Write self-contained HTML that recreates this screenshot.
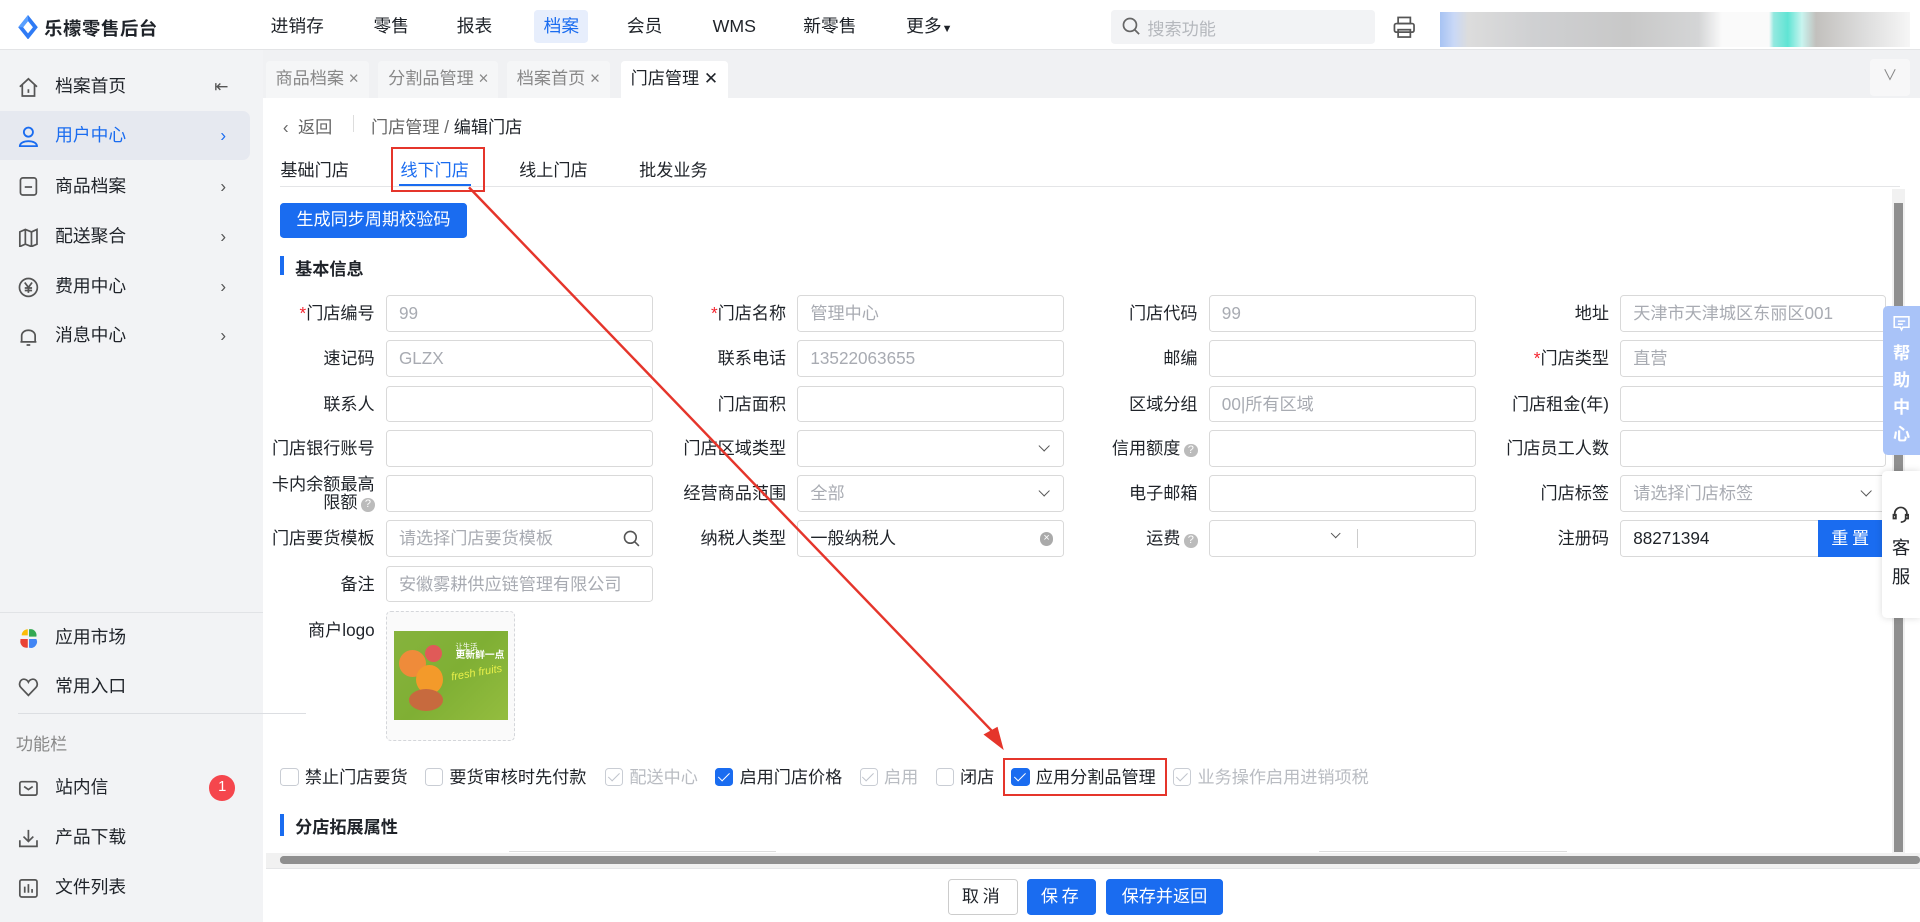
<!DOCTYPE html>
<html><head><meta charset="utf-8">
<style>
*{box-sizing:border-box;margin:0;padding:0}
html,body{width:1920px;height:922px;overflow:hidden;background:#fff}
#w{position:relative;width:1568px;height:753px;zoom:1.2244898;font-family:"Liberation Sans","Noto Sans CJK SC",sans-serif;font-size:14px;color:#1f2329;overflow:hidden}
.a{position:absolute;white-space:nowrap}
.top{left:0;top:0;width:1568px;height:41px;border-bottom:1px solid #e3e4e6;background:#fff}
.nav{top:8px;height:27px;line-height:27px;font-size:14.5px;padding:0 8px}
.side{left:0;top:41px;width:215px;height:712px;background:#f2f3f5}
.si{left:0;width:204px;height:40px;line-height:40px;padding-left:45px;font-size:14.5px}
.si .ic{position:absolute;left:15px;top:12px;width:17px;height:17px}
.chev{position:absolute;left:180px;top:0;color:#555;font-size:14px}
.tabs{left:215px;top:41px;width:1353px;height:39px;background:#f0f1f3}
.tab{top:50px;height:30px;line-height:28px;padding:0 8px;background:#f5f6f7;color:#888;font-size:14px;border-radius:3px 3px 0 0}
.lbl{text-align:right;width:110px;font-size:14px;line-height:30px;height:30px}
.req:before{content:"*";color:#f5222d}
.in{height:30px;border:1px solid #d9d9d9;border-radius:3px;width:218px;line-height:28px;padding-left:10px;color:#a8abb2;font-size:14px;background:#fff}
.in.dk{color:#1f2329}
.dd:after{content:"";position:absolute;right:12px;top:9px;width:6px;height:6px;border-right:1.3px solid #555;border-bottom:1.3px solid #555;transform:rotate(45deg)}
.q{display:inline-block;width:11px;height:11px;border-radius:50%;background:#bbb;color:#fff;font-size:9px;line-height:11px;text-align:center;vertical-align:1px;margin-left:3px}
.cb{top:627px;height:16px;line-height:16px;font-size:14px}
.box{display:inline-block;width:15px;height:15px;border:1px solid #c9cdd4;border-radius:3px;vertical-align:-3px;margin-right:5px;position:relative;background:#fff}
.box.on{background:#1a6cf0;border-color:#1a6cf0}
.box.on:after,.box.dis:after{content:"";position:absolute;left:4px;top:1px;width:4px;height:8px;border-right:1.6px solid #fff;border-bottom:1.6px solid #fff;transform:rotate(45deg)}
.box.dis:after{border-color:#c0c4cc}
.gray{color:#b9bcc2}
.btn{height:29px;line-height:27px;border-radius:3px;text-align:center;font-size:14px;color:#fff;background:#1a6cf0;border:1px solid #1a6cf0}
</style></head><body><div id="w">

<div class="a top"></div>
<svg class="a" style="left:14px;top:12px" width="18" height="20" viewBox="0 0 18 20"><path d="M9 0 L17 10 L9 20 L1 10Z" fill="#2f7bf5"/><path d="M9 5 L13 10 L9 15 L5 10Z" fill="#fff"/><path d="M9 0 L9 5 L5 10 L1 10Z" fill="#5aa0ff"/></svg>
<div class="a" style="left:36px;top:12px;font-size:15px;font-weight:bold;letter-spacing:0.5px">乐檬零售后台</div>
<div class="a nav" style="left:213px">进销存</div>
<div class="a nav" style="left:297px">零售</div>
<div class="a nav" style="left:365px">报表</div>
<div class="a nav" style="left:436px;width:44px;background:#e7eefc;color:#1a6cf0;border-radius:3px">档案</div>
<div class="a nav" style="left:504px">会员</div>
<div class="a nav" style="left:574px">WMS</div>
<div class="a nav" style="left:648px">新零售</div>
<div class="a nav" style="left:732px">更多<span style="font-size:9px">▼</span></div>
<div class="a" style="left:907px;top:8px;width:216px;height:28px;background:#f2f3f5;border-radius:3px"></div>
<svg class="a" style="left:916px;top:14px" width="15" height="16" viewBox="0 0 15 16"><circle cx="6.5" cy="6.5" r="5.3" fill="none" stroke="#666" stroke-width="1.4"/><path d="M10.5 10.5 L14 14" stroke="#666" stroke-width="1.4"/></svg>
<div class="a" style="left:937px;top:12px;color:#b5b8bd;font-size:14px">搜索功能</div>
<svg class="a" style="left:1137px;top:12px" width="20" height="20" viewBox="0 0 20 20" fill="none" stroke="#555" stroke-width="1.4"><rect x="5" y="2" width="10" height="5"/><rect x="2" y="7" width="16" height="7" rx="1.5"/><rect x="5" y="12" width="10" height="6"/></svg>
<div class="a" style="left:1176px;top:10px;width:384px;height:28px;background:linear-gradient(90deg,#a7c3f3 0,#c9d8f6 3%,#dcdcdc 6%,#cfd0d2 20%,#c8c8c8 40%,#d4d5d6 55%,#fafafa 60%,#fafafa 70%,#93e8df 71%,#60e4d4 74%,#c9f4ef 77%,#c2c0bd 80%,#dcdcdc 90%,#f6f6f6 100%)"></div>
<div class="a" style="left:1170px;top:41px;width:392px;height:12px;background:#f5f5f5"></div>

<div class="a side"></div>
<div class="a si" style="top:51px"><svg class="ic" viewBox="0 0 17 17" fill="none" stroke="#555" stroke-width="1.4"><path d="M1.5 8 L8.5 1.5 L15.5 8 M3.5 6.5 V15.5 H13.5 V6.5 M8.5 10 V13"/></svg>档案首页<span class="chev" style="left:175px">⇤</span></div>
<div class="a si" style="top:91px;background:#e6e9f0;color:#1a6cf0;border-radius:0 6px 6px 0"><svg class="ic" viewBox="0 0 17 17" fill="none" stroke="#1a6cf0" stroke-width="1.5"><circle cx="8.5" cy="5" r="3.7"/><path d="M1.5 16.5 C1.5 11 15.5 11 15.5 16.5Z"/></svg>用户中心<span class="chev" style="color:#1a6cf0">›</span></div>
<div class="a si" style="top:132px"><svg class="ic" viewBox="0 0 17 17" fill="none" stroke="#555" stroke-width="1.4"><rect x="2" y="1.5" width="13" height="14" rx="2"/><path d="M5.5 9 H11.5"/></svg>商品档案<span class="chev">›</span></div>
<div class="a si" style="top:173px"><svg class="ic" viewBox="0 0 17 17" fill="none" stroke="#555" stroke-width="1.4"><path d="M1.5 4 L6 2 L11 4 L15.5 2 V14 L11 16 L6 14 L1.5 16Z M6 2 V14 M11 4 V16"/></svg>配送聚合<span class="chev">›</span></div>
<div class="a si" style="top:214px"><svg class="ic" viewBox="0 0 17 17" fill="none" stroke="#555" stroke-width="1.4"><circle cx="8.5" cy="8.5" r="7.3"/><path d="M5.5 4.5 L8.5 8.5 L11.5 4.5 M8.5 8.5 V13 M5.5 9 H11.5 M5.5 11 H11.5"/></svg>费用中心<span class="chev">›</span></div>
<div class="a si" style="top:254px"><svg class="ic" viewBox="0 0 17 17" fill="none" stroke="#555" stroke-width="1.4"><path d="M3 13 V8 C3 2 14 2 14 8 V13 H2 H15 M7 15.5 H10"/></svg>消息中心<span class="chev">›</span></div>
<div class="a" style="left:0;top:500px;width:215px;border-top:1px solid #e1e3e6"></div>
<div class="a si" style="top:501px"><svg class="ic" viewBox="0 0 17 17"><path d="M8 1 A5 5 0 0 0 3 6 H8Z" fill="#fbbc05"/><path d="M9 1 A5 5 0 0 1 15 7 H9Z" fill="#34a853"/><path d="M8 9 V16 A5 5 0 0 1 2 10 V9Z" fill="#ea4335"/><path d="M9 9 H15 A5 5 0 0 1 9 16Z" fill="#4285f4"/></svg>应用市场</div>
<div class="a si" style="top:541px"><svg class="ic" viewBox="0 0 17 17" fill="none" stroke="#555" stroke-width="1.4"><path d="M8.5 15 L2.3 8.5 C0 6 2 1.5 5 1.8 C6.8 2 8 3.2 8.5 4.2 C9 3.2 10.2 2 12 1.8 C15 1.5 17 6 14.7 8.5Z"/></svg>常用入口</div>
<div class="a" style="left:15px;top:582px;width:235px;border-top:1px solid #dcdee2;width:235px"></div>
<div class="a" style="left:13px;top:596px;color:#888;font-size:14px">功能栏</div>
<div class="a si" style="top:623px"><svg class="ic" viewBox="0 0 17 17" fill="none" stroke="#555" stroke-width="1.4"><rect x="1.5" y="3" width="14" height="11" rx="1.5"/><path d="M5 7 L8.5 9.5 L12 7"/></svg>站内信</div>
<div class="a" style="left:171px;top:633px;width:21px;height:21px;border-radius:50%;background:#f5464d;color:#fff;font-size:12px;line-height:21px;text-align:center">1</div>
<div class="a si" style="top:664px"><svg class="ic" viewBox="0 0 17 17" fill="none" stroke="#555" stroke-width="1.4"><path d="M8.5 1.5 V11 M4.5 7 L8.5 11 L12.5 7 M1.5 10 V15 H15.5 V10"/></svg>产品下载</div>
<div class="a si" style="top:705px"><svg class="ic" viewBox="0 0 17 17" fill="none" stroke="#555" stroke-width="1.4"><rect x="1.5" y="1.5" width="14" height="14" rx="1.5"/><path d="M5.5 12 V7 M8.5 12 V5 M11.5 12 V9"/></svg>文件列表</div>

<div class="a tabs"></div>
<div class="a tab" style="left:217px">商品档案 ×</div>
<div class="a tab" style="left:309px">分割品管理 ×</div>
<div class="a tab" style="left:414px">档案首页 ×</div>
<div class="a tab" style="left:507px;background:#fff;color:#1f2329">门店管理 ✕</div>
<div class="a" style="left:1527px;top:48px;width:33px;height:30px;background:#f7f7f8;border-radius:3px;color:#888;text-align:center;line-height:28px;font-size:12px">∨</div>

<div class="a" style="left:231px;top:92px;color:#666">‹&nbsp; 返回</div>
<div class="a" style="left:288px;top:94px;height:14px;border-left:1px solid #ddd"></div>
<div class="a" style="left:303px;top:92px;color:#666">门店管理 / <span style="color:#1f2329">编辑门店</span></div>

<div class="a" style="left:229px;top:127px">基础门店</div>
<div class="a" style="left:327px;top:127px;color:#1a6cf0">线下门店</div>
<div class="a" style="left:424px;top:127px">线上门店</div>
<div class="a" style="left:522px;top:127px">批发业务</div>
<div class="a" style="left:229px;top:152px;width:1323px;border-top:1px solid #e4e5e7"></div>
<div class="a" style="left:326px;top:150px;width:59px;height:2px;background:#1a6cf0"></div>
<div class="a" style="left:319px;top:120px;width:77px;height:37px;border:2px solid #e5352b"></div>

<div class="a" style="left:1545px;top:154px;width:11px;height:546px;background:#f1f1f1"></div>
<div class="a" style="left:1547px;top:166px;width:7px;height:530px;background:#8f8f8f"></div>

<div class="a btn" style="left:229px;top:166px;width:152px;height:28px;line-height:26px">生成同步周期校验码</div>
<div class="a" style="left:229px;top:209px;width:3px;height:16px;background:#1a6cf0"></div>
<div class="a" style="left:241px;top:208px;font-weight:bold">基本信息</div>

<div class="a lbl req" style="left:196px;top:241px">门店编号</div><div class="a in" style="left:315px;top:241px">99</div>
<div class="a lbl" style="left:196px;top:278px">速记码</div><div class="a in" style="left:315px;top:278px">GLZX</div>
<div class="a lbl" style="left:196px;top:315px">联系人</div><div class="a in" style="left:315px;top:315px"></div>
<div class="a lbl" style="left:196px;top:351px">门店银行账号</div><div class="a in" style="left:315px;top:351px"></div>
<div class="a" style="left:215px;top:388px;width:91px;text-align:right;line-height:15px;font-size:14px">卡内余额最高<br>限额<span class="q">?</span></div><div class="a in" style="left:315px;top:388px"></div>
<div class="a lbl" style="left:196px;top:425px">门店要货模板</div><div class="a in" style="left:315px;top:425px">请选择门店要货模板<svg style="position:absolute;right:9px;top:7px" width="14" height="14" viewBox="0 0 14 14" fill="none" stroke="#555" stroke-width="1.3"><circle cx="6" cy="6" r="4.8"/><path d="M9.5 9.5 L13 13"/></svg></div>
<div class="a lbl" style="left:196px;top:462px">备注</div><div class="a in" style="left:315px;top:462px">安徽雾耕供应链管理有限公司</div>
<div class="a lbl req" style="left:532px;top:241px">门店名称</div><div class="a in" style="left:651px;top:241px">管理中心</div>
<div class="a lbl" style="left:532px;top:278px">联系电话</div><div class="a in" style="left:651px;top:278px">13522063655</div>
<div class="a lbl" style="left:532px;top:315px">门店面积</div><div class="a in" style="left:651px;top:315px"></div>
<div class="a lbl" style="left:532px;top:351px">门店区域类型</div><div class="a in dd" style="left:651px;top:351px"></div>
<div class="a lbl" style="left:532px;top:388px">经营商品范围</div><div class="a in dd" style="left:651px;top:388px">全部</div>
<div class="a lbl" style="left:532px;top:425px">纳税人类型</div><div class="a in dk" style="left:651px;top:425px">一般纳税人<span style="position:absolute;right:8px;top:9px;width:11px;height:11px;border-radius:50%;background:#aaa;color:#fff;font-size:9px;line-height:11px;text-align:center">×</span></div>
<div class="a lbl" style="left:868px;top:241px">门店代码</div><div class="a in" style="left:987px;top:241px">99</div>
<div class="a lbl" style="left:868px;top:278px">邮编</div><div class="a in" style="left:987px;top:278px"></div>
<div class="a lbl" style="left:868px;top:315px">区域分组</div><div class="a in" style="left:987px;top:315px">00|所有区域</div>
<div class="a lbl" style="left:868px;top:351px">信用额度<span class="q">?</span></div><div class="a in" style="left:987px;top:351px"></div>
<div class="a lbl" style="left:868px;top:388px">电子邮箱</div><div class="a in" style="left:987px;top:388px"></div>
<div class="a lbl" style="left:868px;top:425px">运费<span class="q">?</span></div><div class="a in" style="left:987px;top:425px"><span style="position:absolute;left:100px;top:7px;width:6px;height:6px;border-right:1.3px solid #555;border-bottom:1.3px solid #555;transform:rotate(45deg)"></span><span style="position:absolute;left:120px;top:6px;height:16px;border-left:1px solid #ccc"></span></div>
<div class="a lbl" style="left:1204px;top:241px">地址</div><div class="a in" style="left:1323px;top:241px;width:217px">天津市天津城区东丽区001</div>
<div class="a lbl req" style="left:1204px;top:278px">门店类型</div><div class="a in" style="left:1323px;top:278px;width:217px">直营</div>
<div class="a lbl" style="left:1204px;top:315px">门店租金(年)</div><div class="a in" style="left:1323px;top:315px;width:217px"></div>
<div class="a lbl" style="left:1204px;top:351px">门店员工人数</div><div class="a in" style="left:1323px;top:351px;width:217px"></div>
<div class="a lbl" style="left:1204px;top:388px">门店标签</div><div class="a in dd" style="left:1323px;top:388px;width:217px">请选择门店标签</div>
<div class="a lbl" style="left:1204px;top:425px">注册码</div><div class="a in dk" style="left:1323px;top:425px;width:217px">88271394</div>
<div class="a" style="left:1485px;top:425px;width:55px;height:30px;background:#1a6cf0;color:#fff;text-align:center;line-height:30px;font-size:14px;letter-spacing:3px">重置</div>

<div class="a" style="left:1538px;top:250px;width:30px;height:122px;background:#a9c3f8;border-radius:4px 0 0 4px;color:#fff;text-align:center;font-size:14px;line-height:22px;padding-top:6px;font-weight:bold"><svg width="14" height="14" viewBox="0 0 14 14" fill="none" stroke="#fff" stroke-width="1.3"><path d="M1 1.5 H13 V10 H8 L7 12 L6 10 H1Z M4 5 H10 M4 7.5 H8"/></svg><br>帮<br>助<br>中<br>心</div>
<div class="a" style="left:1537px;top:385px;width:31px;height:120px;background:#fff;border-radius:4px 0 0 4px;box-shadow:0 0 6px rgba(0,0,0,.15);text-align:center;font-size:15px;line-height:24px;padding-top:26px"><svg width="16" height="16" viewBox="0 0 16 16" fill="none" stroke="#333" stroke-width="1.4"><path d="M3 9 V7 A5 5 0 0 1 13 7 V9 M2 8 H4 V11 H2Z M12 8 H14 V11 H12Z M12 11 C12 13 10 14 8 14"/></svg><br>客<br>服</div>

<div class="a lbl" style="left:196px;top:500px">商户logo</div>
<div class="a" style="left:315px;top:499px;width:106px;height:106px;border:1px dashed #d4d6da;border-radius:4px;background:#fafafa"></div>
<div class="a" style="left:322px;top:515px;width:93px;height:73px;background:linear-gradient(135deg,#86b33d,#7faf34 50%,#94bd3f);overflow:hidden">
 <div style="position:absolute;left:4px;top:16px;width:22px;height:22px;border-radius:50%;background:#ef8b3a"></div>
 <div style="position:absolute;left:18px;top:28px;width:22px;height:24px;border-radius:50%;background:#f39a2a"></div>
 <div style="position:absolute;left:12px;top:48px;width:28px;height:18px;border-radius:50%;background:#c76a3e"></div>
 <div style="position:absolute;left:25px;top:12px;width:14px;height:14px;border-radius:50%;background:#e05a58"></div>
 <div style="position:absolute;left:50px;top:9px;color:#fff;font-size:6px;line-height:8px">让生活<br><b style="font-size:8px">更新鲜一点</b></div>
 <div style="position:absolute;left:46px;top:30px;color:#e9f04a;font-size:9px;font-style:italic;transform:rotate(-10deg)">fresh fruits</div>
</div>

<div class="a cb" style="left:229px"><span class="box"></span>禁止门店要货</div>
<div class="a cb" style="left:347px"><span class="box"></span>要货审核时先付款</div>
<div class="a cb gray" style="left:494px"><span class="box dis"></span>配送中心</div>
<div class="a cb" style="left:584px"><span class="box on"></span>启用门店价格</div>
<div class="a cb gray" style="left:702px"><span class="box dis"></span>启用</div>
<div class="a cb" style="left:764px"><span class="box"></span>闭店</div>
<div class="a cb" style="left:826px"><span class="box on"></span>应用分割品管理</div>
<div class="a cb gray" style="left:958px"><span class="box dis"></span>业务操作启用进销项税</div>
<div class="a" style="left:819px;top:619px;width:134px;height:31px;border:2px solid #e5352b"></div>

<div class="a" style="left:229px;top:665px;width:3px;height:18px;background:#1a6cf0"></div>
<div class="a" style="left:241px;top:664px;font-weight:bold">分店拓展属性</div>
<div class="a" style="left:416px;top:695px;width:218px;border-top:1px solid #ddd"></div>
<div class="a" style="left:1077px;top:695px;width:203px;border-top:1px solid #ddd"></div>

<div class="a" style="left:217px;top:697px;width:1351px;height:12px;background:#f1f1f1"></div>
<div class="a" style="left:229px;top:699px;width:1339px;height:7px;background:#8f8f8f;border-radius:3px"></div>
<div class="a" style="left:217px;top:709px;width:1351px;border-top:1px solid #e4e5e7"></div>

<div class="a btn" style="left:774px;top:718px;width:57px;background:#fff;color:#1f2329;border-color:#ccc;letter-spacing:3px">取消</div>
<div class="a btn" style="left:839px;top:718px;width:56px;letter-spacing:3px">保存</div>
<div class="a btn" style="left:903px;top:718px;width:96px">保存并返回</div>

<svg class="a" style="left:0;top:0" width="1568" height="753"><line x1="383" y1="153" x2="813" y2="600" stroke="#e5352b" stroke-width="2"/><path d="M818 610 L805 600 L814 595Z" fill="#e5352b" stroke="#e5352b" stroke-width="2"/></svg>

</div></body></html>
